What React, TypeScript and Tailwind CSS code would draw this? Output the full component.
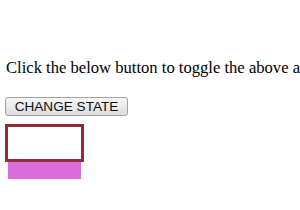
export default function App() {
  return (
    <div className="w-[300px] h-[210px] bg-white overflow-hidden pl-[5px] pt-[58px]">
      <p className="whitespace-nowrap text-[16.6px] leading-[19px] text-black ml-[1px]" style={{ fontFamily: '"Liberation Serif", "Times New Roman", serif' }}>
        Click the below button to toggle the above animation
      </p>
      <button
        className="mt-[20px] block w-[123px] h-[19px] rounded-[3px] border border-[#a3a3a3] bg-gradient-to-b from-[#f7f7f7] to-[#dcdcdc] text-[13.6px] leading-none text-[#111] p-0"
        style={{ fontFamily: '"Liberation Sans", Arial, sans-serif' }}
      >
        CHANGE STATE
      </button>
      <div className="mt-[8px] w-[79px] h-[38px] border-[3px] border-[#8d2e35] bg-white" />
      <div className="ml-[3px] w-[73px] h-[17px] bg-[#db6cdb]" />
    </div>
  );
}
